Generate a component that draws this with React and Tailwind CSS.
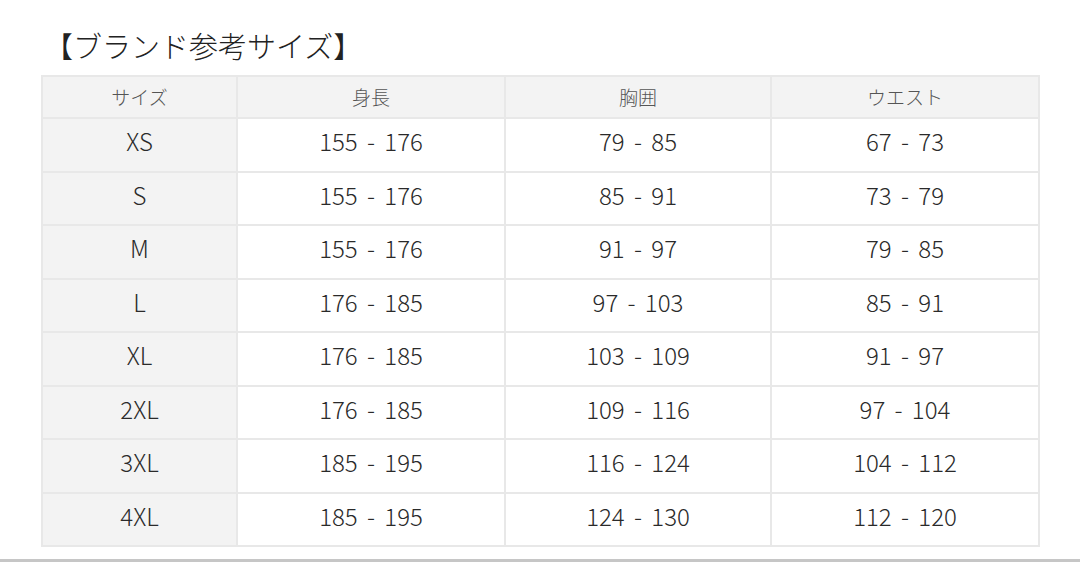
import React from "react";

const rows = [
  ["XS", "155 - 176", "79 - 85", "67 - 73"],
  ["S", "155 - 176", "85 - 91", "73 - 79"],
  ["M", "155 - 176", "91 - 97", "79 - 85"],
  ["L", "176 - 185", "97 - 103", "85 - 91"],
  ["XL", "176 - 185", "103 - 109", "91 - 97"],
  ["2XL", "176 - 185", "109 - 116", "97 - 104"],
  ["3XL", "185 - 195", "116 - 124", "104 - 112"],
  ["4XL", "185 - 195", "124 - 130", "112 - 120"],
];

const headers = ["サイズ", "身長", "胸囲", "ウエスト"];

const App = () => {
  return (
    <div
      className="w-[1080px] h-[562px] bg-white flex flex-col text-[#2a2a2a]"
      style={{ fontFamily: '"Noto Sans CJK JP", "Noto Sans", sans-serif' }}
    >
      <h2 className="ml-[44px] mt-[25px] text-[29px] leading-[40px] font-light text-[#222]">
        【ブランド参考サイズ】
      </h2>
      <table className="ml-[41px] mt-[10px] w-[997px] table-fixed border-collapse border-2 border-[#e8e8e8]">
        <colgroup>
          <col className="w-[195px]" />
          <col className="w-[268px]" />
          <col className="w-[266px]" />
          <col className="w-[268px]" />
        </colgroup>
        <thead>
          <tr className="bg-[#f3f3f3]">
            {headers.map((h) => (
              <th
                key={h}
                className="h-[42px] border-2 border-[#e8e8e8] text-[19px] font-light text-[#555] p-0"
              >
                {h}
              </th>
            ))}
          </tr>
        </thead>
        <tbody>
          {rows.map((r) => (
            <tr key={r[0]}>
              {r.map((c, i) => (
                <td
                  key={i}
                  className={
                    "h-[53.5px] border-2 border-[#e8e8e8] text-center text-[24px] font-light px-0 pt-0 pb-[7px] [word-spacing:4px] " +
                    (i === 0 ? "bg-[#f3f3f3]" : "bg-white")
                  }
                >
                  {c}
                </td>
              ))}
            </tr>
          ))}
        </tbody>
      </table>
      <div className="mt-auto h-[3px] bg-[#c6c6c6]" />
    </div>
  );
};

export default App;
